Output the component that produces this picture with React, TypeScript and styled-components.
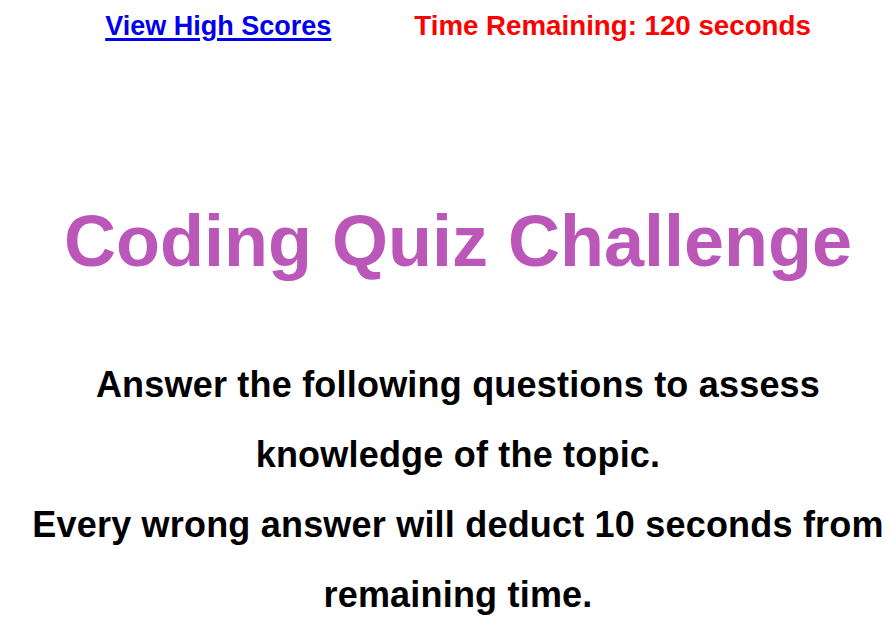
import React from "react";
import styled, { createGlobalStyle } from "styled-components";

const GlobalStyle = createGlobalStyle`
  html, body {
    margin: 0;
    padding: 0;
    background: #ffffff;
  }
  body {
    margin: 8px;
    font-family: "Liberation Sans", Arial, sans-serif;
  }
`;

const Page = styled.main`
  padding-left: 24px;
  display: flex;
  flex-direction: column;
  align-items: center;
  text-align: center;
`;

const TopBar = styled.header`
  display: flex;
  justify-content: center;
  align-items: baseline;
  gap: 83px;
  width: 100%;
  padding-top: 2px;
  font-size: 27px;
  font-weight: 700;
  line-height: 31px;
`;

const ScoresLink = styled.a`
  color: #0000ee;
  text-decoration: underline;
  text-decoration-thickness: 3px;
  text-underline-offset: 3px;
  cursor: pointer;
`;

const Timer = styled.span`
  color: #ff0000;
  font-size: 27.7px;
`;

const Title = styled.h1`
  margin: 158px 0 0;
  font-size: 72px;
  font-weight: 700;
  line-height: 83px;
  color: #bb57b9;
`;

const Intro = styled.p`
  margin: 67px 0 0;
  font-size: 36px;
  font-weight: 700;
  line-height: 70px;
  letter-spacing: 0.2px;
  color: #000000;
`;

export default function App() {
  return (
    <>
      <GlobalStyle />
      <Page>
        <TopBar>
          <ScoresLink href="#highscores">View High Scores</ScoresLink>
          <Timer>Time Remaining: 120 seconds</Timer>
        </TopBar>
        <Title>Coding Quiz Challenge</Title>
        <Intro>
          Answer the following questions to assess knowledge of the topic.
          <br />
          Every wrong answer will deduct 10 seconds from remaining time.
        </Intro>
      </Page>
    </>
  );
}
